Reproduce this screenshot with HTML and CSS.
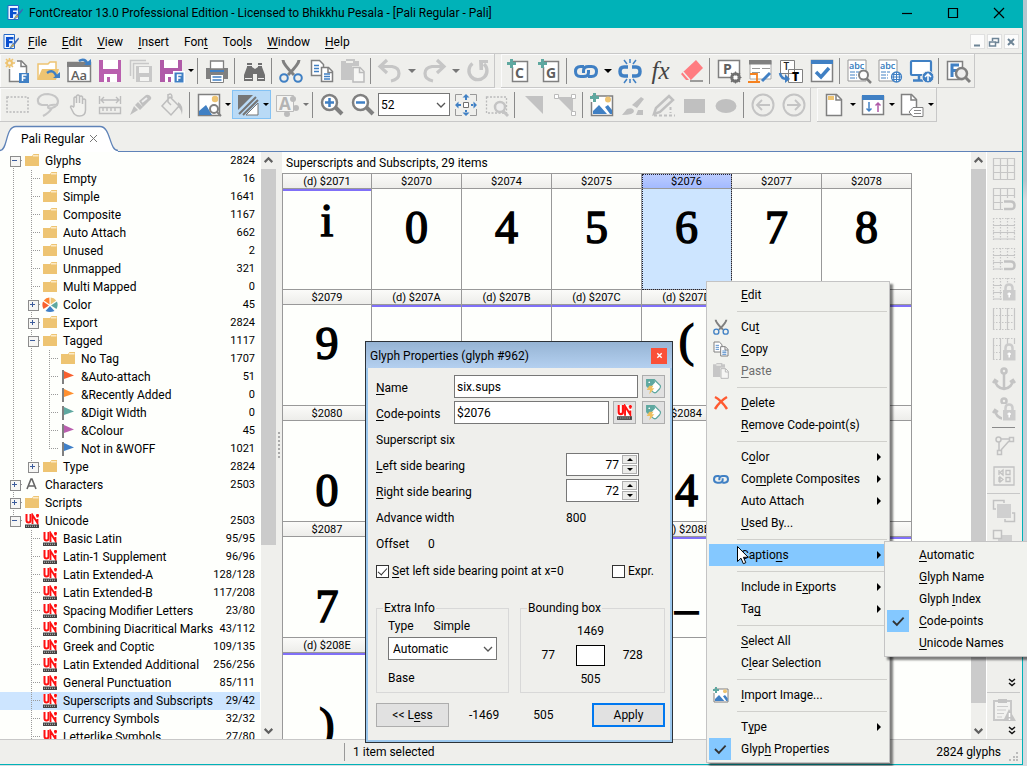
FILE: index.html
```html
<!DOCTYPE html>
<html lang="en">
<head>
<meta charset="utf-8">
<title>FontCreator 13.0 Professional Edition</title>
<link rel="stylesheet" href="styles.css">
</head>
<body>
<svg class="defs" aria-hidden="true">
  <symbol id="app" viewBox="0 0 16 16"><path d="M1 .5h10.500v14H1z" fill="#fff" stroke="#2468c8"/><path d="M2 1.500h9v12H2z" fill="#e8f2ff"/><path d="M3 3h7.500v2.500H6V7h3.500v2.300H6V13H3z" fill="#0a50d0"/><path d="M15.500 3.500 10 9.500l1.500 1.500 4.500-6z" fill="#3a68b8"/><path d="M10 9.500 6.500 14.500l5-3z" fill="#f0b840" stroke="#2060b0" stroke-width=".6"/></symbol>
  <symbol id="folder" viewBox="0 0 16 16"><path d="M1 3h7l1.500-2H15v12H1z" fill="#eec472"/><path d="M9 2.800h5.500" stroke="#fff5dc" stroke-width="1.200"/></symbol>
  <symbol id="uni" viewBox="0 0 16 16"><path d="M1 1h14v14H1z" fill="#fff"/><path d="M2.500 1v6.500q0 2 2 2t2-2V1" fill="none" stroke="#f11" stroke-width="2"/><path d="M8.500 11V2l5 8V6M13.500 1v3.500M12 2.500h3" fill="none" stroke="#f11" stroke-width="1.800"/><path d="M1 11.500h14V15H1z" fill="#444"/><path d="M2 13.200h12" stroke="#ccc" stroke-width="1" stroke-dasharray="1 1"/></symbol>
  <symbol id="flag" viewBox="0 0 16 16"><path d="M2 1h2v14H2z" fill="#808080"/><path d="M4 2l10 4.500L4 10z" fill="currentColor"/></symbol>
  <symbol id="wheel" viewBox="0 0 16 16"><path d="M7.600 7.500 7.400 .5Q4 .5 1.800 3.500z" fill="#ff8030"/><path d="M8.600 7.500V.5Q12 .5 14.200 3.500z" fill="#eec472"/><path d="M9 8.500l6-4q1.500 4-.5 7.500z" fill="#5fa8a0"/><path d="M8 9 12.500 14q-4.500 2-9 0z" fill="#4080c8"/><path d="M7 8.500 1 4.500q-1.500 4 .5 7.500z" fill="#f86030"/></symbol>
  <symbol id="cut" viewBox="0 0 24 24"><path d="M4 1q0 4 11 15M20 1q0 4-11 15" stroke="#808080" stroke-width="3" fill="none"/><g fill="none" stroke="#4080c4" stroke-width="2"><circle cx="5" cy="19" r="3.800"/><circle cx="19" cy="19" r="3.800"/></g></symbol>
  <symbol id="copy" viewBox="0 0 24 24"><g fill="#fff" stroke="#808080" stroke-width="1.500"><path d="M1.500 1.500h8l4 4v11h-12z"/><path d="M11.500 8.500h7l4 4v10h-11z"/><path d="M18 8.500v5h4.500" fill="none"/></g><path d="M4 6.500h5M4 9.500h5M4 12.500h5M14 15h6M14 17.500h6M14 20h6" stroke="#4080c4" stroke-width="1.300"/></symbol>
  <symbol id="paste" viewBox="0 0 24 24"><path d="M0 2h5V0h9v2h4v5h-7v14H0z" fill="#c6c6c6"/><path d="M5 3h7" stroke="#f0f0ec" stroke-width="2"/><path d="M12 8.500h7l4 4v10.500H12z" fill="#f6f6f4" stroke="#bbb" stroke-width="1.500"/><path d="M18.500 8.500v5H23" fill="none" stroke="#bbb" stroke-width="1.500"/></symbol>
  <symbol id="chain" viewBox="0 0 24 24"><g fill="none" stroke="#4080c4" stroke-width="3"><path d="M10 7.500H6.500Q1.500 7.500 1.500 12.500t5 5h3q5 0 5-4v-2.500"/><path d="M14 17.500h3.500q5 0 5-5t-5-5h-3q-5 0-5 4V14"/></g></symbol>
  <symbol id="addimg" viewBox="0 0 24 24"><path d="M2 3h20.500v19.500H1.500V9" fill="#fff" stroke="#808080" stroke-width="1.500"/><path d="M3 21v-3l6-6 8 9zM15 14l3-2 4 5v4h-2z" fill="#4080c4"/><circle cx="18" cy="6.500" r="3" fill="#eec472"/><path d="M4.500 0v9M0 4.500h9" stroke="#5fa8a0" stroke-width="3"/></symbol>
  <symbol id="grid" viewBox="0 0 24 24"><path d="M1.500 1.500h21v21h-21zM8.500 1.500v21M15.500 1.500v21M1.500 8.500h21M1.500 15.500h21" fill="none" stroke="#c6c6c6" stroke-width="1.200"/></symbol>
  <symbol id="magnet" viewBox="0 0 24 24"><path d="M11 11h13v13H11z" fill="#efefec"/><path d="M12 14.500h6.500q4 0 4 4t-4 3.500H12" fill="none" stroke="#c2c2c2" stroke-width="2.500"/></symbol>
  <symbol id="hgrid" viewBox="0 0 24 24"><g fill="none" stroke="#c6c6c6" stroke-width="1.200"><path d="M1 8.500h22M1 15.500h22M1 22h22"/><path d="M1.500 1v22M8.500 1v22M15.500 1v22M22.500 1v22M1 1.500h22" stroke-dasharray="1.500 1.500"/></g></symbol>
  <symbol id="vgrid" viewBox="0 0 24 24"><g fill="none" stroke="#c6c6c6" stroke-width="1.200"><path d="M1.500 1v22M8.500 1v22M15.500 1v22M22.500 1v22"/><path d="M1 8.500h22M1 15.500h22M1 1.500h22M1 22.500h22" stroke-dasharray="1.500 1.500"/></g></symbol>
  <symbol id="lock" viewBox="0 0 24 24"><path d="M10 7h14v17H10z" fill="#efefec"/><path d="M13.500 14v-3q0-3.500 3.500-3.500t3.500 3.500v3" fill="none" stroke="#ccc" stroke-width="2.500"/><path d="M11 13h12.500v10.500H11z" fill="#ccc"/><path d="M17.200 15.500v5M15.500 17h3.500" stroke="#fff" stroke-width="1.500"/></symbol>
  <symbol id="anchor" viewBox="0 0 24 24"><g fill="none" stroke="#c4c4c4" stroke-width="2.500"><circle cx="12" cy="4" r="2.500"/><path d="M12 7v15M3 13q1 8 9 9 8-1 9-9M1 16l2-3 3 2M23 16l-2-3-3 2"/></g></symbol>
  <symbol id="mag" viewBox="0 0 24 24"><path d="M15 14l7 7" stroke="#808080" stroke-width="4"/><circle cx="9.500" cy="9.500" r="7.500" fill="#fff" stroke="#808080" stroke-width="2.500"/></symbol>
  <symbol id="tag" viewBox="0 0 20 20"><path d="M2 2h9l7 7q1 2-1 4l-4 4q-2 1-4-1L2 9z" fill="#fff" stroke="#5fa8a0" stroke-width="1.500"/><path d="M2 2h9l1 3-7 8-3-3z" fill="#5fa8a0"/><circle cx="5" cy="5" r="1" fill="#fff"/><path d="M5 9h5l-2 3h3l-6 7 1-5H2z" fill="#eec060"/></symbol>
  <symbol id="tick" viewBox="0 0 16 16"><path d="M3.500 8 7 11.500 13 5" fill="none" stroke="#333" stroke-width="1.600"/></symbol>
  <symbol id="chev" viewBox="0 0 12 12"><path d="M2 4l4 4 4-4" fill="none" stroke="#555" stroke-width="1.300"/></symbol>
  <symbol id="bold" viewBox="0 0 12 12"><path d="M2.500 4.500 6 8l3.500-3.500" fill="none" stroke="#606060" stroke-width="2"/></symbol>
  <symbol id="more" viewBox="0 0 10 10"><path d="M2 1l3 2.500L8 1M2 5l3 2.500L8 5" fill="none" stroke="#111" stroke-width="1.500"/></symbol>
</svg>

<div class="window">
  <header class="titlebar">
    <svg class="i16"><use href="#app"/></svg>
    <h1>FontCreator 13.0 Professional Edition - Licensed to Bhikkhu Pesala - [Pali Regular - Pali]</h1>
    <div class="winbtns">
      <button aria-label="Minimize"><svg viewBox="0 0 12 12"><path d="M1 6.500h10"/></svg></button>
      <button aria-label="Maximize"><svg viewBox="0 0 12 12"><path d="M1.500 1.500h9v9h-9z"/></svg></button>
      <button aria-label="Close"><svg viewBox="0 0 12 12"><path d="M1 1l10 10M11 1 1 11"/></svg></button>
    </div>
  </header>

  <nav class="menubar">
    <svg class="i16"><use href="#app"/></svg>
    <button><u>F</u>ile</button><button><u>E</u>dit</button><button><u>V</u>iew</button><button><u>I</u>nsert</button><button>Fon<u>t</u></button><button>Too<u>l</u>s</button><button><u>W</u>indow</button><button><u>H</u>elp</button>
    <div class="mdi">
      <button aria-label="Minimize document"><svg viewBox="0 0 12 12"><path d="M3 9.500h6"/></svg></button>
      <button aria-label="Restore document"><svg viewBox="0 0 12 12"><path d="M4.500 5V2.500h6v4H8M1.500 6h6v4h-6z" stroke-width="1.500"/></svg></button>
      <button aria-label="Close document"><svg viewBox="0 0 12 12"><path d="M3 3l6 6M9 3 3 9"/></svg></button>
    </div>
  </nav>

  <div class="bars">
    <div class="bar" role="toolbar" aria-label="Standard">
      <button class="tb" aria-label="New"><svg viewBox="0 0 24 24"><path d="M4.500 10v12.500h17V7l-5-5H12" fill="#fff" stroke="#808080" stroke-width="1.500"/><path d="M16 2v5.500h5.500" fill="none" stroke="#808080" stroke-width="1.500"/><circle cx="4.500" cy="4" r="2.500" fill="#f4f1e8" stroke="#eec472" stroke-width="2"/><path d="M4.500-1v3M4.500 6v3M0 4h2M7 4h3M1 0l2 2M8 0 6 2M1 8l2-2M8 8 6 6" stroke="#eec472" stroke-width="1.500"/><path d="M14 14h10v10H14z" fill="#4080c4"/><path d="M17.500 22v-6h4M17.500 19h3" fill="none" stroke="#fff" stroke-width="1.500"/></svg></button>
      <button class="tb" aria-label="Open"><svg viewBox="0 0 24 24"><path d="M2 20V5h10l2-2h6v7" fill="#fff" stroke="#eec472" stroke-width="1.500"/><path d="M1 21 6 10h17l-3 11z" fill="#eec472"/><path d="M11 14q7-5 10 5" fill="none" stroke="#4080c4" stroke-width="2.500"/><path d="M17 19h7v-6z" fill="#4080c4"/></svg></button>
      <button class="tb" aria-label="Installed font"><svg viewBox="0 0 24 24"><path d="M1 3.500h22.500v19H1z" fill="#fff" stroke="#808080" stroke-width="1.500"/><path d="M0 3h24v5H0z" fill="#808080"/><text x="4" y="20.500" class="svgt">Aa</text><path d="M12 2q6-4 9 4" fill="none" stroke="#4080c4" stroke-width="2.500"/><path d="M17 6h7V0z" fill="#4080c4"/></svg></button>
      <button class="tb" aria-label="Save"><svg viewBox="0 0 24 24"><path d="M1 1h22v22H1z" fill="#b95fae"/><path d="M5 1h15v9H5zM6 15h13v8H6z" fill="#fff"/><path d="M9 18h3v5H9z" fill="#b95fae"/></svg></button>
      <button class="tb" aria-label="Save all"><svg viewBox="0 0 24 24"><path d="M1.500 17V1.500H17M4.500 20V4.500H20" fill="none" stroke="#c8c8c8" stroke-width="1.500"/><path d="M7 7h16v16H7z" fill="#c8c8c8"/><path d="M10 8h10v6H10zM11 18h9v4h-9z" fill="#f4f4f2"/></svg></button>
      <button class="tb" aria-label="Export font"><svg viewBox="0 0 24 24"><path d="M0 1h22v22H0z" fill="#b05aa8"/><path d="M4 1h14v8H4zM5 15h10v8H5z" fill="#fff"/><path d="M8 18h3v5H8z" fill="#b05aa8"/><path d="M13 12h12v12H13z" fill="#fff"/><path d="M14.500 13.500h9v10h-9z" fill="#4080c4"/><path d="M17.500 22v-6h4M17.500 19h3" fill="none" stroke="#fff" stroke-width="1.500"/></svg></button><button class="dd" aria-label="Export options"></button>
      <hr>
      <button class="tb" aria-label="Print"><svg viewBox="0 0 24 24"><path d="M1 9h22v11H1z" fill="#808080"/><path d="M5.500 2h13v8h-13z" fill="#fff" stroke="#808080" stroke-width="1.300"/><path d="M5 11h14v2H5z" fill="#4080c4"/><path d="M5.500 15.500h13v8h-13z" fill="#fff" stroke="#808080"/><path d="M7.500 18h9M7.500 21h9" stroke="#4080c4" stroke-width="1.500"/></svg></button>
      <hr>
      <button class="tb" aria-label="Find"><svg viewBox="0 0 24 24"><path d="M5 4h5v4l3 2 3-2V4h4v4l3 8v6h-8v-7h-4v7H2v-6l3-8z" fill="#707070"/><path d="M5 6.500h5M16 6.500h4M3 19.500h7M16 19.500h6" stroke="#eee" stroke-width="1"/></svg></button>
      <hr>
      <button class="tb" aria-label="Cut"><svg><use href="#cut"/></svg></button>
      <button class="tb" aria-label="Copy"><svg><use href="#copy"/></svg></button>
      <button class="tb" aria-label="Paste"><svg><use href="#paste"/></svg></button>
      <hr>
      <button class="tb" aria-label="Undo"><svg viewBox="0 0 24 24"><path d="M9 1 2 7.500 9 14M3 7.500h11q7 1 7 7t-8 7.500" fill="none" stroke="#c6c6c6" stroke-width="3.200"/></svg></button><button class="dd w g" aria-label="Undo list"></button>
      <button class="tb" aria-label="Redo"><svg viewBox="0 0 24 24"><path d="M15 1l7 6.500-7 6.500M21 7.500H10q-7 1-7 7T11 22" fill="none" stroke="#c6c6c6" stroke-width="3.200"/></svg></button><button class="dd w g" aria-label="Redo list"></button>
      <button class="tb" aria-label="Repeat"><svg viewBox="0 0 24 24"><path d="M6.500 4.500A9 9 0 1 0 18 5" fill="none" stroke="#c6c6c6" stroke-width="3.400"/><path d="M13 1h9v3h-5v7h-3.500z" fill="#c6c6c6"/></svg></button>
    </div>
    <div class="bar" role="toolbar" aria-label="Font">
      <button class="tb" aria-label="Add characters"><svg viewBox="0 0 24 24"><path d="M6 2.500h15.500v20h-15V8" fill="#fff" stroke="#808080" stroke-width="1.500"/><path d="M5.500 0v9M1 4.500h9" stroke="#5fa8a0" stroke-width="3"/><text x="9" y="19" class="svgt b">C</text></svg></button>
      <button class="tb" aria-label="Add glyphs"><svg viewBox="0 0 24 24"><path d="M6 2.500h15.500v20h-15V8" fill="#fff" stroke="#808080" stroke-width="1.500"/><path d="M5.500 0v9M1 4.500h9" stroke="#5fa8a0" stroke-width="3"/><text x="9" y="19" class="svgt b">G</text></svg></button>
      <hr>
      <button class="tb" aria-label="Complete composites"><svg><use href="#chain"/></svg></button><button class="dd w" aria-label="Composite options"></button>
      <button class="tb" aria-label="Decompose"><svg viewBox="0 0 24 24"><path d="M10 8H6q-4 0-4 4.500T6 17h4M14 8h4q4 0 4 4.500T18 17h-4" fill="none" stroke="#4080c4" stroke-width="3.500"/><path d="M12 0v4M6 1l3 4M18 1l-3 4M12 24v-4M6 24l3-4M18 24l-3-4" stroke="#4080c4" stroke-width="1.500"/></svg></button>
      <button class="tb fx" aria-label="OpenType designer"><i>fx</i></button>
      <button class="tb" aria-label="Clear"><svg viewBox="0 0 24 24"><path d="M16 1l7 8L11 21H6l-5-6z" fill="#ff7c80"/><path d="M3 13l7 8" stroke="#f0f0ec" stroke-width="1.500"/><path d="M10 22h13" stroke="#808080" stroke-width="1.500"/></svg></button>
      <hr>
      <button class="tb" aria-label="Font properties"><svg viewBox="0 0 24 24"><path d="M1.500 1.500h21v17h-21z" fill="#fff" stroke="#808080" stroke-width="1.500"/><text x="6" y="15" class="svgt b">P</text><circle cx="18.500" cy="18.500" r="4" fill="#eee" stroke="#707070" stroke-width="2.500"/><path d="M18.500 12.500v12M12.500 18.500h12M14 14l9 9M23 14l-9 9" stroke="#707070" stroke-width="1.200"/><circle cx="18.500" cy="18.500" r="2" fill="#fff"/></svg></button>
      <button class="tb" aria-label="Edit tables"><svg viewBox="0 0 24 24"><path d="M2 2h21v18H2z" fill="#fff" stroke="#aaa"/><path d="M1 1h22.500v4.500H1z" fill="#808080"/><path d="M4 9.500h8M14 9.500h8M4 13.500h8" stroke="#999"/><path d="M2 15h7v8H0M9 23h3" fill="none" stroke="#f58220" stroke-width="1.800"/><path d="M14 22l8-8" stroke="#4080c4" stroke-width="3"/></svg></button>
      <button class="tb" aria-label="Transform"><svg viewBox="0 0 24 24"><path d="M1.500 1.500h14v13h-14zM9.500 10.500h14v13h-14z" fill="#fff" stroke="#808080"/><text x="4.500" y="11" class="svgt s">T</text><text x="13" y="21.500" class="svgt m">T</text><path d="M1 14q1 6 7 6" fill="none" stroke="#4080c4" stroke-width="2.500"/><path d="M6 15l5 5-5 4z" fill="#4080c4"/></svg></button>
      <button class="tb" aria-label="Validate"><svg viewBox="0 0 24 24"><path d="M1.500 1.500h21v21h-21z" fill="#fff" stroke="#808080" stroke-width="1.500"/><path d="M1 1h22v4H1z" fill="#4080c4"/><path d="M6 13l5 5 8-9" fill="none" stroke="#4080c4" stroke-width="3.500"/></svg></button>
      <hr>
      <button class="tb" aria-label="Preview text"><svg viewBox="0 0 24 24"><path d="M1 1h18v21H1z" fill="#fff" stroke="#999"/><text x="2" y="9.500" class="svgt abc">abc</text><path d="M3 13h9M3 16h7M3 19h7" stroke="#4080c4" stroke-dasharray="5 1"/><circle cx="16.500" cy="16" r="4.500" fill="#fff" stroke="#808080" stroke-width="2"/><path d="M19.500 19.500 24 24" stroke="#808080" stroke-width="2.500"/></svg></button>
      <button class="tb" aria-label="Preview web font"><svg viewBox="0 0 24 24"><path d="M1 1h18v21H1z" fill="#fff" stroke="#999"/><text x="2" y="9.500" class="svgt abc">abc</text><path d="M3 13h9M3 16h7M3 19h7" stroke="#4080c4" stroke-dasharray="5 1"/><circle cx="18.500" cy="18" r="5" fill="#fff" stroke="#4080c4" stroke-width="1.300"/><path d="M18.500 13v10M13.500 18h10M14.500 15.500h8M14.500 20.500h8M16 14q-1 4 0 8M21 14q1 4 0 8" fill="none" stroke="#4080c4"/></svg></button>
      <button class="tb" aria-label="Install font"><svg viewBox="0 0 24 24"><rect x="2" y="2" width="20" height="14" rx="1" fill="#fff" stroke="#4080c4" stroke-width="2.200"/><path d="M10 16v5M4 21.500h10" stroke="#4080c4" stroke-width="2.500"/><circle cx="19" cy="18" r="6" fill="#4080c4" stroke="#eee"/><path d="M19 22v-6M16 18l3-3 3 3" fill="none" stroke="#fff" stroke-width="1.500"/></svg></button>
      <hr>
      <button class="tb" aria-label="Font overview"><svg viewBox="0 0 24 24"><path d="M1.500 2.500h15v18h-15z" fill="#fff" stroke="#808080" stroke-width="1.500"/><path d="M6 18V6h7M6 11.500h5" fill="none" stroke="#4080c4" stroke-width="3"/><circle cx="15.500" cy="14.500" r="5.500" fill="#eee" stroke="#808080" stroke-width="2.500"/><path d="M19 18l5 5" stroke="#808080" stroke-width="3"/></svg></button>
    </div>
  </div>

  <div class="bars">
    <div class="bar" role="toolbar" aria-label="Drawing">
      <button class="tb" aria-label="Select"><svg viewBox="0 0 24 24"><path d="M2 4h21v15H2z" fill="none" stroke="#bbb" stroke-width="1.500" stroke-dasharray="2 1.500"/></svg></button>
      <button class="tb" aria-label="Lasso"><svg viewBox="0 0 24 24"><path d="M12 12H6q-5-1-4-6 2-5 10-5 9 1 10 7 0 5-6 7-4 1-4-1 1-3 10-2M16 15q-3 5-9 8" fill="none" stroke="#c6c6c6" stroke-width="2.200"/></svg></button>
      <button class="tb" aria-label="Pan"><svg viewBox="0 0 24 24"><path d="M7 13V5q1-2 2.500 0v5-7q1.500-2 3 0v7-6q1.500-2 3 0v7-4q1.500-2 3 0v10q0 6-6 6-5 0-7-5l-2-4q0-2 3 0z" fill="#f2f2ef" stroke="#bdbdbd" stroke-width="1.500"/></svg></button>
      <button class="tb" aria-label="Measure"><svg viewBox="0 0 24 24"><path d="M1.500 3v8M22.500 3v8M3 7h18M6 4 3 7l3 3M18 4l3 3-3 3M1.500 14.500h21v6h-21zM5 15v3M9 15v3M13 15v3M17 15v3" fill="none" stroke="#bdbdbd" stroke-width="1.400"/></svg></button>
      <button class="tb" aria-label="Knife"><svg viewBox="0 0 24 24"><path d="M1 22l4-9 4 4zM6 12l3-3 5 5-3 3zM10 8l7-6q3-1 5 2 1 2-2 4l-6 6z" fill="#c0c0c0"/><path d="M13 9l5-4" stroke="#eee" stroke-width="2"/></svg></button>
      <button class="tb" aria-label="Fill"><svg viewBox="0 0 24 24"><path d="M10 4l9 9-8 9-9-9zM8 1v8l3 3M8 2q4-3 4 3" fill="none" stroke="#bdbdbd" stroke-width="1.500"/><path d="M18 9q6 3 4 13-1-6-4-8z" fill="#bdbdbd"/></svg></button>
      <hr>
      <button class="tb" aria-label="Background image"><svg viewBox="0 0 24 24"><path d="M1.500 1.500h21v21h-21z" fill="#fff" stroke="#808080" stroke-width="1.500"/><path d="M2 22v-4l7-6 6 10z" fill="#4080c4"/><circle cx="18" cy="6" r="3.200" fill="#eec472"/><circle cx="17" cy="16" r="4" fill="#fff" stroke="#808080" stroke-width="2"/><path d="M20 19l4 4" stroke="#808080" stroke-width="2"/></svg></button><button class="dd" aria-label="Image options"></button>
      <span class="active"><button class="tb" aria-label="Fill mode"><svg viewBox="0 0 24 24"><path d="M2 2h15L2 17z" fill="#757575"/><path d="M20 4 3 21M22 7 7 22" stroke="#757575" stroke-width="2"/><path d="M22 10v12H10z" fill="#fff" stroke="#757575"/></svg></button><button class="dd" aria-label="Fill options"></button></span>
      <button class="tb" aria-label="Glyph colors"><svg viewBox="0 0 24 24"><path d="M1.500 2.500h17v16h-17z" fill="#f4f4f2" stroke="#bbb"/><text x="4" y="17" class="svgt c">A</text><circle cx="18" cy="6" r="3" fill="#bbb"/><circle cx="21" cy="15" r="3" fill="#bbb"/><circle cx="12" cy="21" r="3" fill="#bbb"/></svg></button><button class="dd g" aria-label="Color options"></button>
      <hr>
      <button class="tb" aria-label="Zoom in"><svg viewBox="0 0 24 24"><use href="#mag"/><path d="M9.500 5v9M5 9.500h9" stroke="#4080c4" stroke-width="2.500"/></svg></button>
      <button class="tb" aria-label="Zoom out"><svg viewBox="0 0 24 24"><use href="#mag"/><path d="M5 9.500h9" stroke="#4080c4" stroke-width="2.500"/></svg></button>
      <label class="combo zoom"><select aria-label="Zoom level"><option>52</option></select><svg><use href="#chev"/></svg></label>
      <button class="tb" aria-label="Zoom to fit"><svg viewBox="0 0 24 24"><path d="M8 1.500H1.500V8M16 1.500h6.500V8M8 22.500H1.500V16M16 22.500h6.500V16" fill="none" stroke="#999"/><path d="M9.500 9.500h5v5h-5z" fill="#fff" stroke="#707070"/><path d="M12 1l3.500 3.500h-7zM12 23l3.500-3.500h-7zM1 12l3.500-3.500v7zM23 12l-3.500-3.500v7zM11 4h2v3h-2zM11 17h2v3h-2zM4 11h3v2H4zM17 11h3v2h-3z" fill="#4080c4"/></svg></button>
      <button class="tb" aria-label="Zoom selection"><svg viewBox="0 0 24 24"><path d="M1.500 4h20v16h-20z" fill="none" stroke="#bbb" stroke-width="1.300" stroke-dasharray="2 1.500"/><circle cx="15" cy="14" r="5" fill="#eee" stroke="#c4c4c4" stroke-width="2.500"/><path d="M18 18l5 5" stroke="#c4c4c4" stroke-width="3"/></svg></button>
      <hr>
      <button class="tb" aria-label="Contour mode"><svg viewBox="0 0 24 24"><path d="M3 3h18v18z" fill="#c2c2c2"/></svg></button>
      <button class="tb" aria-label="Point mode"><svg viewBox="0 0 24 24"><path d="M4 4h16v16z" fill="#c2c2c2"/><path d="M1.500 1.500h4v4h-4zM18.500 1.500h4v4h-4zM18.500 18.500h4v4h-4z" fill="#fff" stroke="#bbb"/></svg></button>
      <hr>
      <button class="tb" aria-label="Import image"><svg><use href="#addimg"/></svg></button>
      <button class="tb" aria-label="Brush"><svg viewBox="0 0 24 24"><path d="M1 22l5-6q6-2 7 2 0 4-12 4zM11 12l9-8 3 2-7 9zM15 22h7v-5h-5" fill="#c0c0c0"/></svg></button>
      <button class="tb" aria-label="Pencil"><svg viewBox="0 0 24 24"><path d="M2 21l2-6L17 3l4 4L8 19z" fill="#ececea" stroke="#c0c0c0" stroke-width="2.500"/><path d="M2 22.500h21M18.500 14v6" stroke="#c0c0c0" stroke-width="2" stroke-dasharray="3 2"/></svg></button>
      <button class="tb" aria-label="Rectangle"><svg viewBox="0 0 24 24"><path d="M1 6h21v14H1z" fill="#c0c0c0"/></svg></button>
      <button class="tb" aria-label="Ellipse"><svg viewBox="0 0 24 24"><ellipse cx="12" cy="13" rx="10.500" ry="7" fill="#c0c0c0"/></svg></button>
      <hr>
      <button class="tb" aria-label="Previous glyph"><svg viewBox="0 0 24 24"><circle cx="12" cy="12" r="10.500" fill="none" stroke="#c4c4c4" stroke-width="2"/><path d="M19 12H6M11 7l-5 5 5 5" fill="none" stroke="#c4c4c4" stroke-width="1.800"/></svg></button>
      <button class="tb" aria-label="Next glyph"><svg viewBox="0 0 24 24"><circle cx="12" cy="12" r="10.500" fill="none" stroke="#c4c4c4" stroke-width="2"/><path d="M5 12h13M13 7l5 5-5 5" fill="none" stroke="#c4c4c4" stroke-width="1.800"/></svg></button>
    </div>
    <div class="bar" role="toolbar" aria-label="Overview">
      <button class="tb" aria-label="Caption"><svg viewBox="0 0 24 24"><path d="M4.500 1.500h10l5 5v16h-15z" fill="#fff" stroke="#808080" stroke-width="1.500"/><path d="M14 1.500V7h5.500" fill="none" stroke="#808080" stroke-width="1.500"/><path d="M6 3h6v4H6z" fill="#eec472"/></svg></button><button class="dd" aria-label="Caption options"></button>
      <button class="tb" aria-label="Sort"><svg viewBox="0 0 24 24"><path d="M1.500 3.500h21v18h-21z" fill="#fff" stroke="#808080" stroke-width="1.500"/><path d="M1 2h22v5H1z" fill="#4080c4"/><path d="M8 9v9M5.500 15.500 8 18l2.500-2.500" fill="none" stroke="#4080c4" stroke-width="1.500"/><path d="M17 19v-9M14.500 12.500 17 10l2.500 2.500" fill="none" stroke="#b05aa8" stroke-width="1.500"/></svg></button><button class="dd" aria-label="Sort options"></button>
      <button class="tb" aria-label="Tag glyphs"><svg viewBox="0 0 24 24"><path d="M1.500 1.500h10l5 5v15h-15z" fill="#fff" stroke="#808080" stroke-width="1.500"/><path d="M11 1.500V7h5.500" fill="none" stroke="#808080" stroke-width="1.500"/><path d="M9 19l4-4.500h10v9H13z" fill="#fff" stroke="#808080"/><path d="M14 17.500h7M14 20.500h7" stroke="#888"/></svg></button><button class="dd" aria-label="Tag options"></button>
    </div>
  </div>

  <div class="tabs">
    <div class="tab">
      <svg viewBox="0 0 118 27"><path d="M0 25.500c8 0 5-24 16-24h84c11 0 9 24 18 24V27H0z" fill="#fff"/><path d="M0 25.500c8 0 5-24 16-24h84c11 0 9 24 18 24" fill="none" stroke="#5f83b8" stroke-width="1.300"/></svg>
      <span>Pali Regular</span><button aria-label="Close tab"><svg viewBox="0 0 9 9"><path d="M1 1l7 7M8 1 1 8" stroke="#777" fill="none"/></svg></button>
    </div>
  </div>

  <main class="work">
    <ul class="tree">
      <li><i class="m top"></i><svg><use href="#folder"/></svg><span>Glyphs</span><b>2824</b></li>
      <li><i class="v"></i><i class="t"></i><svg><use href="#folder"/></svg><span>Empty</span><b>16</b></li>
      <li><i class="v"></i><i class="t"></i><svg><use href="#folder"/></svg><span>Simple</span><b>1641</b></li>
      <li><i class="v"></i><i class="t"></i><svg><use href="#folder"/></svg><span>Composite</span><b>1167</b></li>
      <li><i class="v"></i><i class="t"></i><svg><use href="#folder"/></svg><span>Auto Attach</span><b>662</b></li>
      <li><i class="v"></i><i class="t"></i><svg><use href="#folder"/></svg><span>Unused</span><b>2</b></li>
      <li><i class="v"></i><i class="t"></i><svg><use href="#folder"/></svg><span>Unmapped</span><b>321</b></li>
      <li><i class="v"></i><i class="t"></i><svg><use href="#folder"/></svg><span>Multi Mapped</span><b>0</b></li>
      <li><i class="v"></i><i class="p"></i><svg><use href="#wheel"/></svg><span>Color</span><b>45</b></li>
      <li><i class="v"></i><i class="p"></i><svg><use href="#folder"/></svg><span>Export</span><b>2824</b></li>
      <li><i class="v"></i><i class="m"></i><svg><use href="#folder"/></svg><span>Tagged</span><b>1117</b></li>
      <li><i class="v"></i><i class="v"></i><i class="t"></i><svg><use href="#folder"/></svg><span>No Tag</span><b>1707</b></li>
      <li><i class="v"></i><i class="v"></i><i class="t"></i><svg class="red"><use href="#flag"/></svg><span>&amp;Auto-attach</span><b>51</b></li>
      <li><i class="v"></i><i class="v"></i><i class="t"></i><svg class="orange"><use href="#flag"/></svg><span>&amp;Recently Added</span><b>0</b></li>
      <li><i class="v"></i><i class="v"></i><i class="t"></i><svg class="green"><use href="#flag"/></svg><span>&amp;Digit Width</span><b>0</b></li>
      <li><i class="v"></i><i class="v"></i><i class="t"></i><svg class="purple"><use href="#flag"/></svg><span>&amp;Colour</span><b>45</b></li>
      <li><i class="v"></i><i class="v"></i><i class="t end"></i><svg class="blue"><use href="#flag"/></svg><span>Not in &amp;WOFF</span><b>1021</b></li>
      <li><i class="v"></i><i class="p end"></i><svg><use href="#folder"/></svg><span>Type</span><b>2824</b></li>
      <li><i class="p"></i><svg viewBox="0 0 16 16"><path d="M3 12 7 2h1l4 10M4.500 9h6" fill="none" stroke="#666" stroke-width="1.600"/></svg><span>Characters</span><b>2503</b></li>
      <li><i class="p"></i><svg><use href="#folder"/></svg><span>Scripts</span><b></b></li>
      <li><i class="m end"></i><svg><use href="#uni"/></svg><span>Unicode</span><b>2503</b></li>
      <li><i></i><i class="t"></i><svg><use href="#uni"/></svg><span>Basic Latin</span><b>95/95</b></li>
      <li><i></i><i class="t"></i><svg><use href="#uni"/></svg><span>Latin-1 Supplement</span><b>96/96</b></li>
      <li><i></i><i class="t"></i><svg><use href="#uni"/></svg><span>Latin Extended-A</span><b>128/128</b></li>
      <li><i></i><i class="t"></i><svg><use href="#uni"/></svg><span>Latin Extended-B</span><b>117/208</b></li>
      <li><i></i><i class="t"></i><svg><use href="#uni"/></svg><span>Spacing Modifier Letters</span><b>23/80</b></li>
      <li><i></i><i class="t"></i><svg><use href="#uni"/></svg><span>Combining Diacritical Marks</span><b>43/112</b></li>
      <li><i></i><i class="t"></i><svg><use href="#uni"/></svg><span>Greek and Coptic</span><b>109/135</b></li>
      <li><i></i><i class="t"></i><svg><use href="#uni"/></svg><span>Latin Extended Additional</span><b>256/256</b></li>
      <li><i></i><i class="t"></i><svg><use href="#uni"/></svg><span>General Punctuation</span><b>85/111</b></li>
      <li class="sel"><i></i><i class="t"></i><svg><use href="#uni"/></svg><span>Superscripts and Subscripts</span><b>29/42</b></li>
      <li><i></i><i class="t"></i><svg><use href="#uni"/></svg><span>Currency Symbols</span><b>32/32</b></li>
      <li><i></i><i class="t"></i><svg><use href="#uni"/></svg><span>Letterlike Symbols</span><b>27/80</b></li>
    </ul>
    <div class="scroll"><svg class="up"><use href="#bold"/></svg><div class="thumb"></div><svg><use href="#bold"/></svg></div>
    <div class="split"></div>
    <section class="overview">
      <h2>Superscripts and Subscripts, 29 items</h2>
      <div class="cells">
        <div class="cell d"><h3>(d) $2071</h3><p class="high">i</p></div><div class="cell"><h3>$2070</h3><p>0</p></div><div class="cell"><h3>$2074</h3><p>4</p></div><div class="cell"><h3>$2075</h3><p>5</p></div><div class="cell picked"><h3>$2076</h3><p>6</p></div><div class="cell"><h3>$2077</h3><p>7</p></div><div class="cell"><h3>$2078</h3><p>8</p></div>
        <div class="cell"><h3>$2079</h3><p>9</p></div><div class="cell d"><h3>(d) $207A</h3><p class="low">+</p></div><div class="cell d"><h3>(d) $207B</h3><p></p></div><div class="cell d"><h3>(d) $207C</h3><p></p></div><div class="cell d"><h3>(d) $207D</h3><p class="paren">(</p></div><div class="cell d"><h3></h3><p></p></div><div class="cell d"><h3></h3><p></p></div>
        <div class="cell sub"><h3>$2080</h3><p>0</p></div><div class="cell"><h3></h3><p></p></div><div class="cell"><h3></h3><p></p></div><div class="cell"><h3></h3><p></p></div><div class="cell sub"><h3>$2084</h3><p>4</p></div><div class="cell"><h3></h3><p></p></div><div class="cell"><h3></h3><p></p></div>
        <div class="cell sub"><h3>$2087</h3><p>7</p></div><div class="cell"><h3></h3><p></p></div><div class="cell"><h3></h3><p></p></div><div class="cell d"><h3></h3><p></p></div><div class="cell sub d"><h3>(d) $208B</h3><p>–</p></div><div class="cell d"><h3></h3><p></p></div><div class="cell d"><h3></h3><p></p></div>
        <div class="cell sub d"><h3>(d) $208E</h3><p class="paren">)</p></div>
      </div>
    </section>
    <div class="scroll"><svg class="up"><use href="#bold"/></svg><div class="thumb long"></div><svg><use href="#bold"/></svg></div>
    <aside class="side" aria-label="Grid tools">
      <button aria-label="Grid"><svg><use href="#grid"/></svg></button>
      <button aria-label="Snap to grid"><svg><use href="#grid"/><use href="#magnet"/></svg></button>
      <button aria-label="Guidelines"><svg><use href="#hgrid"/></svg></button>
      <button aria-label="Snap to guidelines"><svg><use href="#hgrid"/><use href="#magnet"/></svg></button>
      <button aria-label="Lock guidelines"><svg><use href="#hgrid"/><use href="#lock"/></svg></button>
      <button aria-label="Metrics"><svg><use href="#vgrid"/></svg></button>
      <button aria-label="Lock metrics"><svg><use href="#vgrid"/><use href="#lock"/></svg></button>
      <button aria-label="Anchors"><svg><use href="#anchor"/></svg></button>
      <button aria-label="Lock anchors"><svg><use href="#anchor"/><use href="#lock"/></svg></button>
      <hr>
      <button aria-label="Nodes"><svg viewBox="0 0 24 24"><path d="M7 8v8M9 5h8M17 7 9 16" stroke="#c2c2c2" stroke-width="1.500"/><path d="M17.500 3.500h4v4h-4zM5.500 16.500h4v4h-4z" fill="none" stroke="#c2c2c2" stroke-width="1.500"/><circle cx="6.500" cy="5.500" r="2.500" fill="none" stroke="#c2c2c2" stroke-width="1.500"/></svg></button>
      <button aria-label="Comparison"><svg viewBox="0 0 24 24"><path d="M2 3h20v18H2zM7 6v5M11 6 8 8.500l3 2.500zM14 6.500h4v4h-4zM7 13v5M8 13l3 2.500L8 18zM14 13.500h4v4h-4z" fill="none" stroke="#c2c2c2" stroke-width="1.300"/></svg></button>
      <hr class="full">
      <button aria-label="Bring to front"><svg viewBox="0 0 24 24"><path d="M5 5h14v14H5z" fill="#d0d0d0"/><path d="M4 10H1.500v-8.500H12V4M20 14h2.500v8.500H13V20" fill="none" stroke="#c2c2c2" stroke-width="1.500"/></svg></button>
      <button aria-label="Send to back"><svg viewBox="0 0 24 24"><path d="M6 6h14v14H6z" fill="#d0d0d0"/><path d="M1.500 1.500h8v8h-8zM14 14h8v8h-8z" fill="#efefec" stroke="#c2c2c2" stroke-width="1.500"/></svg></button>
      <span class="fill"></span>
      <svg class="more"><use href="#more"/></svg>
      <hr class="full">
      <button aria-label="Paste special"><svg viewBox="0 0 24 24"><path d="M2 3h17v19H2z" fill="#f2f2f0" stroke="#c8c8c8" stroke-width="2"/><path d="M6 1h9v4H6zM11 23l6-12 7 12z" fill="#c4c4c4"/><path d="M5 8.500h11M5 12h9M5 15.500h7M5 19h5" stroke="#ccc"/><path d="M17.500 15v4M17.500 20.500v1.500" stroke="#fff" stroke-width="1.500"/></svg></button>
      <svg class="more"><use href="#more"/></svg>
    </aside>
  </main>

  <footer class="status"><span>1 item selected</span><span class="count">2824 glyphs</span><svg viewBox="0 0 10 10"><path d="M7 0h2v2H7zM7 4h2v2H7zM7 7h2v2H7zM4 4h2v2H4zM4 7h2v2H4zM0 7h2v2H0z" fill="#bbb"/></svg></footer>
</div>

<form class="dialog" role="dialog" aria-label="Glyph Properties">
  <div class="dtitle"><span>Glyph Properties (glyph #962)</span><button type="button" aria-label="Close"><svg viewBox="0 0 8 8"><path d="M1.500 1.500l5 5M6.500 1.500l-5 5" stroke="#fff" stroke-width="1.600"/></svg></button></div>
  <div class="dbody">
    <div class="drow"><label for="gname"><u>N</u>ame</label><input id="gname" value="six.sups"><button type="button" class="sq" aria-label="Generate name"><svg><use href="#tag"/></svg></button></div>
    <div class="drow"><label for="gcode"><u>C</u>ode-points</label><input id="gcode" value="$2076"><button type="button" class="sq" aria-label="Unicode chart"><svg><use href="#uni"/></svg></button><button type="button" class="sq" aria-label="Generate code-points"><svg><use href="#tag"/></svg></button></div>
    <div class="drow"><span>Superscript six</span></div>
    <div class="drow"><label class="wide" for="lsb"><u>L</u>eft side bearing</label><div class="spin"><input id="lsb" value="77"><span><button type="button" aria-label="Increase left"></button><button type="button" class="dn" aria-label="Decrease left"></button></span></div></div>
    <div class="drow"><label class="wide" for="rsb"><u>R</u>ight side bearing</label><div class="spin"><input id="rsb" value="72"><span><button type="button" aria-label="Increase right"></button><button type="button" class="dn" aria-label="Decrease right"></button></span></div></div>
    <div class="drow"><span class="wide">Advance width</span><span>800</span></div>
    <div class="drow"><span class="off">Offset</span><span>0</span></div>
    <div class="checks"><label><input type="checkbox" checked><span><u>S</u>et left side bearing point at x=0</span></label><label><input type="checkbox"><span>Expr.</span></label></div>
    <div class="groups">
      <fieldset class="extra"><legend>Extra Info</legend><p class="type"><span>Type</span><span>Simple</span></p><label class="combo"><select aria-label="Type"><option>Automatic</option></select><svg><use href="#chev"/></svg></label><p class="base">Base</p></fieldset>
      <fieldset class="bbox"><legend>Bounding box</legend><div><span></span><span>1469</span><span></span><span>77</span><span class="box"></span><span>728</span><span></span><span>505</span></div></fieldset>
    </div>
    <div class="acts"><button type="button">&lt;&lt; L<u>e</u>ss</button><span>-1469</span><span class="base-y">505</span><button type="button" class="def">Apply</button></div>
  </div>
</form>

<div class="menu ctx" role="menu">
  <button role="menuitem"><u>E</u>dit</button>
  <hr>
  <button role="menuitem"><svg><use href="#cut"/></svg>Cu<u>t</u></button>
  <button role="menuitem"><svg><use href="#copy"/></svg><u>C</u>opy</button>
  <button role="menuitem" class="dis"><svg><use href="#paste"/></svg><u>P</u>aste</button>
  <hr>
  <button role="menuitem"><svg viewBox="0 0 16 16"><path d="M2 2q6 3 12 12M14 2Q7 6 2 14" fill="none" stroke="#ff5a30" stroke-width="2.500"/></svg><u>D</u>elete</button>
  <button role="menuitem"><u>R</u>emove Code-point(s)</button>
  <hr>
  <button role="menuitem" class="more">C<u>o</u>lor</button>
  <button role="menuitem" class="more"><svg><use href="#chain"/></svg>Co<u>m</u>plete Composites</button>
  <button role="menuitem" class="more">Auto Attach</button>
  <button role="menuitem"><u>U</u>sed By...</button>
  <hr>
  <button role="menuitem" class="more hot">Captio<u>n</u>s</button>
  <hr>
  <button role="menuitem" class="more">Include in E<u>x</u>ports</button>
  <button role="menuitem" class="more">Ta<u>g</u></button>
  <hr>
  <button role="menuitem"><u>S</u>elect All</button>
  <button role="menuitem">C<u>l</u>ear Selection</button>
  <hr>
  <button role="menuitem"><svg><use href="#addimg"/></svg><u>I</u>mport Image...</button>
  <hr>
  <button role="menuitem" class="more">T<u>y</u>pe</button>
  <button role="menuitem"><svg class="on"><use href="#tick"/></svg>Glyp<u>h</u> Properties</button>
</div>
<div class="menu submenu" role="menu">
  <button role="menuitem"><u>A</u>utomatic</button>
  <button role="menuitem"><u>G</u>lyph Name</button>
  <button role="menuitem">Glyph <u>I</u>ndex</button>
  <button role="menuitem"><svg class="on"><use href="#tick"/></svg><u>C</u>ode-points</button>
  <button role="menuitem"><u>U</u>nicode Names</button>
</div>
<svg class="cursor" viewBox="0 0 12 19"><path d="M.5.500v15l3.500-3.300 2.300 5.500 2.500-1-2.300-5.400h4.700z" fill="#fff" stroke="#000"/></svg>
</body>
</html>
```

FILE: styles.css
```css
* { box-sizing: border-box; }
body {
  margin: 0;
  height: 100vh;
  padding: 0 4px 1px 0;
  overflow: hidden;
  background: linear-gradient(#b3c6ce 0, #b8c4cc 180px, #d8d8dc 200px, #c4ccd4 380px, #d8dce0 100%);
  font: 12px/18px Roboto, "Open Sans", sans-serif;
  color: #000;
}
button, input, select { font: inherit; color: inherit; margin: 0; padding: 0; }
button { background: none; border: 0; }
h1, h2, h3, p, ul, hr { margin: 0; padding: 0; font: inherit; }
hr { border: 0; }
svg { display: block; flex: none; }
u { text-underline-offset: 2px; text-decoration-skip-ink: none; }
.defs { position: absolute; width: 0; height: 0; }
.i16 { width: 16px; height: 16px; }

.window {
  display: flex;
  flex-direction: column;
  height: 100%;
  background: #efefec;
  border-right: 1px solid #00b2b8;
  border-bottom: 1px solid #00b2b8;
}
.titlebar {
  display: flex;
  align-items: center;
  height: 28px;
  padding: 0 0 3px 7px;
  gap: 6px;
  background: #00b2b8;
}
.titlebar h1 { flex: 1; }
.winbtns { display: flex; }
.winbtns button { width: 46px; display: flex; justify-content: center; }
.winbtns svg { width: 12px; height: 12px; fill: none; stroke: #000; stroke-width: 1.200; }

.menubar {
  display: flex;
  align-items: center;
  height: 26px;
  padding: 2px 3px 0;
  border-bottom: 1px solid #c8c8c8;
}
.menubar > button { margin-left: 15px; }
.menubar > .i16 + button { margin-left: 9px; }
.mdi { display: flex; gap: 2px; margin-left: auto; }
.mdi button { width: 15px; height: 15px; background: #fcfcfc; border: 1px solid #e0e0e0; }
.mdi svg { width: 12px; height: 12px; fill: none; stroke: #6d8496; stroke-width: 2; }

.bars { display: flex; gap: 6px; height: 34px; }
.bar {
  display: flex;
  align-items: center;
  padding: 0 1px;
  border: solid #c8c8c8;
  border-width: 0 1px 1px 0;
  box-shadow: inset 1px 1px #fbfbfb;
}
.tb { width: 31px; display: flex; justify-content: center; }
.tb svg { width: 24px; height: 24px; overflow: visible; }
.bar hr { width: 1px; height: 26px; margin: 0 3px 0 2px; background: #8a8a8a; }
.dd { width: 8px; display: flex; justify-content: center; }
.dd::after { content: ""; border: 3px solid transparent; border-top-color: #000; border-bottom: 0; }
.dd.w { width: 13px; }
.dd.w::after { border-width: 4px; border-bottom: 0; }
.dd.g::after { border-top-color: #777; }
.active { display: flex; align-items: center; height: 29px; background: #b9daf6; border: 1px solid #84c2f4; }
.active .tb { width: 29px; }
.fx { font: italic 25px/24px "Liberation Serif", serif; color: #444; }
.svgt { font-family: "Open Sans", sans-serif; fill: #606060; font-size: 13px; font-weight: 600; }
.svgt.b { font-size: 14px; font-weight: 700; }
.svgt.s { font-size: 10px; fill: #222; }
.svgt.m { font-size: 12px; font-weight: 800; fill: #000; }
.svgt.c { font-size: 17px; font-weight: 700; fill: #b4b4b4; }
.svgt.abc { font-size: 9px; fill: #2f78bc; }
.combo { display: block; position: relative; }
.combo select {
  appearance: none;
  width: 100%;
  height: 23px;
  padding: 0 4px;
  border: 1px solid #777;
  border-radius: 0;
  background: #fff;
}
.combo svg { position: absolute; right: 3px; top: 6px; width: 12px; height: 12px; pointer-events: none; }
.zoom { width: 72px; }
.zoom select { padding: 0 2px; }

.tabs { display: flex; align-items: flex-end; height: 30px; box-shadow: inset 0 -1px #5f83b8; }
.tab { position: relative; display: flex; align-items: center; gap: 5px; width: 118px; height: 27px; padding-left: 21px; }
.tab > svg { position: absolute; inset: 0; }
.tab span, .tab button { position: relative; }
.tab button svg { width: 9px; height: 9px; }

.work { display: flex; flex: 1; min-height: 0; background: #fefffc; }
.tree { width: 261px; overflow: hidden; list-style: none; }
.tree li { display: flex; align-items: center; height: 18px; padding: 0 5px; margin-right: 1px; white-space: nowrap; }
.tree li.sel { background: #cde5ff; }
.tree svg { width: 16px; height: 16px; margin: 0 1px; }
.tree span { margin-left: 4px; }
.tree b { margin-left: auto; font-size: 11px; font-weight: 400; }
.tree i { position: relative; width: 18px; height: 18px; flex: none; }
.tree .v { background: repeating-linear-gradient(#9a9a9a 0 1px, transparent 1px 2px) 8px 0 / 1px 100% no-repeat; }
.tree .t, .tree .p, .tree .m {
  background:
    repeating-linear-gradient(#9a9a9a 0 1px, transparent 1px 2px) 8px 0 / 1px 100% no-repeat,
    repeating-linear-gradient(90deg, #9a9a9a 0 1px, transparent 1px 2px) 8px 8px / 10px 1px no-repeat;
}
.tree .end { background-size: 1px 50%, 10px 1px; }
.tree .top { background-position: 8px 10px, 8px 8px; }
.tree .p::before, .tree .m::before {
  content: "";
  position: absolute;
  left: 5px;
  top: 4px;
  width: 9px;
  height: 9px;
  border: 1px solid #8c8c8c;
  background: linear-gradient(#3c5c9c, #3c5c9c) 1px 3px / 5px 1px no-repeat, #f6f6f4;
}
.tree .p::before {
  background: linear-gradient(#3c5c9c, #3c5c9c) 1px 3px / 5px 1px no-repeat, linear-gradient(#3c5c9c, #3c5c9c) 3px 1px / 1px 5px no-repeat, #f6f6f4;
}
.red { color: #f86030; }
.orange { color: #ff9030; }
.green { color: #5fa8a0; }
.purple { color: #b95fae; }
.blue { color: #4080c8; }

.scroll { display: flex; flex-direction: column; align-items: center; width: 15px; background: #efefec; }
.scroll svg { width: 13px; height: 13px; margin: 2px 0; }
.scroll .up { transform: rotate(180deg); }
.thumb { width: 100%; height: 64%; margin-bottom: auto; background: #cbcbcb; }
.thumb.long { height: 91%; }
.split { width: 6px; background: #efefec; display: flex; align-items: center; }
.split::after { content: ""; width: 2px; height: 28px; margin-left: 2px; background: repeating-linear-gradient(#aaa 0 2px, transparent 2px 4px); }

.overview { flex: 1; overflow: hidden; }
.overview h2 { padding: 2px 4px 1px; }
.cells {
  display: grid;
  grid-template-columns: 89px repeat(6, 90px);
  grid-auto-rows: 116px;
  width: 630px;
  border-top: 1px solid #999;
  border-left: 1px solid #999;
}
.cell { border: solid #999; border-width: 0 1px 1px 0; text-align: center; }
.cell h3 { height: 15px; line-height: 15px; font-size: 11px; border-bottom: 1px solid #999; background: linear-gradient(#fbfbf9, #ededea); }
.cell.d h3 + p { border-top: 2px solid #8070f8; }
.cell p { height: 100px; padding-top: 13px; font: 46px/52px "Liberation Serif", serif; -webkit-text-stroke: 1.5px #000; }
.cell .high { padding-top: 4px; }
.cell .low { padding-top: 20px; }
.cell .paren { padding-top: 8px; }
.cell.sub p { padding-top: 44px; }
.cell.picked { background: #cde5ff; outline: 1px dotted #223; outline-offset: -1px; }
.picked h3 { background: linear-gradient(#bccdff, #a3baff); }

.side { display: flex; flex-direction: column; width: 36px; padding: 2px 2px 1px 0; background: #efefec; border-left: 1px solid #fff; }
.side button { height: 30px; display: flex; justify-content: center; align-items: center; }
.side button svg { width: 24px; height: 24px; }
.side hr { height: 1px; margin: 3px 5px; background: #8a8a8a; }
.side hr.full { margin: 2px 0; background: #c8c8c8; }
.side .fill { flex: 1; }
.side .more { width: 10px; height: 10px; margin: 1px 3px 2px auto; }

.status { display: flex; align-items: center; height: 25px; padding: 0 3px 0 344px; border-top: 1px solid #c8c8c8; }
.status span:first-child { border-left: 1px solid #999; padding-left: 8px; }
.status .count { margin-left: auto; }
.status svg { width: 10px; height: 10px; margin: 10px 0 0 8px; }

.dialog {
  position: absolute;
  left: 365px;
  top: 341px;
  width: 308px;
  border: 1px solid #2c3238;
  background: #efefec;
  box-shadow: inset 0 0 0 2px #9cc8ee;
}
.dtitle {
  display: flex;
  align-items: center;
  justify-content: space-between;
  height: 26px;
  padding: 1px 5px 0 4px;
  background: linear-gradient(#96b4d4, #b4d0f0);
}
.dtitle button { display: flex; align-items: center; justify-content: center; width: 16px; height: 16px; background: #fa5038; }
.dtitle svg { width: 7px; height: 7px; }
.dbody { padding: 7px 7px 15px 10px; }
.drow { display: flex; height: 26px; line-height: 26px; }
.drow label { width: 78px; }
.drow .wide { width: 190px; }
.drow .off { width: 52px; }
.drow > input, .spin { flex: 1; min-width: 0; height: 23px; border: 1px solid #777; background: #fff; padding: 0 2px; }
.sq { display: flex; align-items: center; justify-content: center; width: 23px; height: 23px; margin-left: 4px; border: 1px solid #adadad; background: #e1e1e1; }
.sq svg { width: 17px; height: 17px; }
.sq + .sq { margin-left: 6px; }
.drow .spin { flex: none; display: flex; width: 73px; padding: 1px; }
.spin input { flex: 1; min-width: 0; border: 0; background: none; text-align: right; padding-right: 3px; line-height: 18px; }
.spin span { display: flex; flex-direction: column; width: 15px; gap: 1px; }
.spin button { flex: 1; display: flex; align-items: center; justify-content: center; border: 1px solid #b0b0b0; background: #ececea; }
.spin button::after { content: ""; border: 3px solid transparent; border-bottom-color: #000; border-top: 0; }
.spin .dn::after { border: 3px solid transparent; border-top-color: #000; border-bottom: 0; }
.checks { display: flex; justify-content: space-between; height: 26px; margin-top: 1px; padding-right: 11px; }
.checks label { display: flex; align-items: center; gap: 3px; }
.checks input { appearance: none; display: flex; justify-content: center; width: 13px; height: 13px; border: 1px solid #333; background: #fff; }
.checks input:checked::after { content: ""; width: 4px; height: 8px; border: solid #333; border-width: 0 1px 1px 0; transform: rotate(42deg); }
.groups { display: flex; gap: 11px; margin-top: 16px; }
fieldset { margin: 0; min-width: 0; border: 1px solid #d8d8d8; padding: 0; }
legend { padding: 0 1px; margin-left: 6px; line-height: 16px; }
.extra { width: 133px; padding: 0 11px 4px; }
.extra legend { margin-left: -5px; }
.type { display: flex; gap: 20px; line-height: 20px; margin-bottom: 1px; }
.base { margin-top: 8px; line-height: 20px; }
.bbox { flex: 1; }
.bbox div { display: grid; grid-template-columns: 1fr 30px 1fr; grid-auto-rows: 24px; place-items: center; padding: 3px 4px 0 0; line-height: 20px; }
.box { width: 29px; height: 21px; border: 1px solid #000; background: #fff; }
.acts { display: flex; align-items: center; margin-top: 10px; gap: 20px; }
.acts .base-y { margin-left: 14px; }
.acts button { width: 73px; height: 24px; border: 1px solid #adadad; background: #e1e1e1; }
.acts .def { margin-left: auto; border: 2px solid #0078f0; }

.menu { position: absolute; display: flex; flex-direction: column; padding: 2px; background: #f1f2ee; border: 1px solid #c4c4c4; box-shadow: 3px 3px 2px rgba(0, 0, 0, .5); }
.menu button { position: relative; display: flex; height: 22px; line-height: 22px; padding-left: 32px; text-align: left; white-space: pre; }
.menu hr { height: 1px; margin: 5px 0 4px 28px; background: #d0d0cc; }
.menu svg { position: absolute; left: 4px; top: 3px; width: 16px; height: 16px; }
.menu .on { left: 0; top: 0; width: 22px; height: 22px; padding: 2px; background: #84c8ff; }
.menu .more::after { content: ""; margin: 7px 6px 0 auto; height: 0; border: 4px solid transparent; border-left-color: #000; border-right: 0; }
.menu .dis { color: #6d6d6d; }
.menu .hot { background: #84c8ff; }
.ctx { left: 706px; top: 281px; width: 184px; }
.submenu { left: 884px; top: 541px; width: 150px; }
.cursor { position: absolute; left: 737px; top: 546px; width: 12px; height: 19px; }
```
